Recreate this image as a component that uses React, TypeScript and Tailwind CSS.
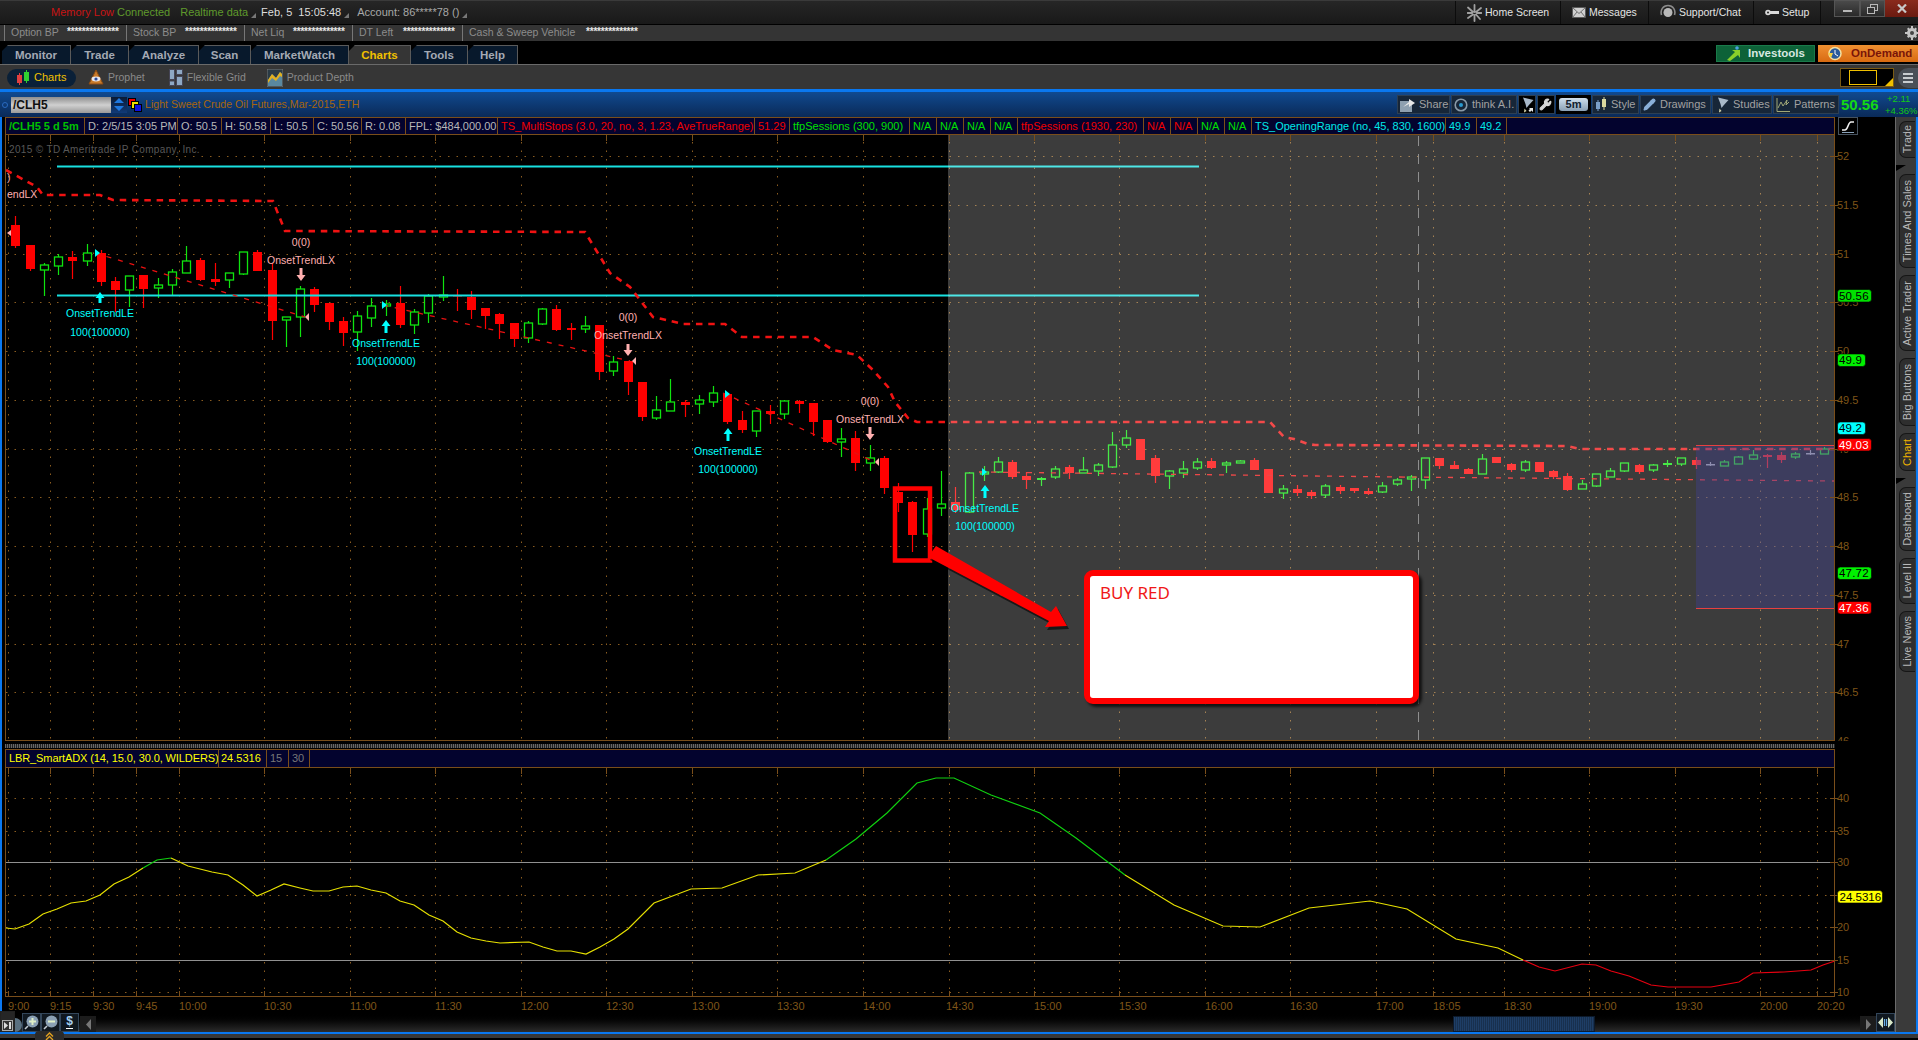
import React from "react";
import { Pencil, Wrench } from "lucide-react";

type Candle = ["r" | "g" | "f" | "x", number, number, number, number];

// kind, wick top, body top, body bottom, wick bottom
const CANDLES: Candle[] = [
  ["r", 216, 225, 246, 248], ["r", 245, 245, 269, 271], ["g", 263, 265, 270, 296], ["g", 254, 257, 266, 275],
  ["r", 251, 257, 261, 279], ["g", 244, 253, 261, 266], ["r", 250, 253, 282, 286], ["r", 277, 281, 290, 312],
  ["g", 276, 276, 290, 307], ["r", 275, 275, 289, 308], ["g", 278, 285, 288, 298], ["g", 269, 272, 285, 295],
  ["g", 246, 261, 273, 273], ["r", 258, 260, 280, 281], ["r", 263, 279, 282, 286], ["g", 273, 273, 280, 288],
  ["g", 252, 252, 274, 275], ["r", 250, 252, 271, 271], ["r", 263, 270, 321, 340], ["g", 317, 317, 320, 347],
  ["g", 286, 289, 317, 337], ["r", 287, 289, 305, 312], ["r", 303, 303, 322, 330], ["r", 317, 321, 333, 346],
  ["g", 311, 316, 332, 351], ["g", 298, 306, 318, 327], ["g", 300, 304, 306, 316], ["r", 286, 303, 325, 328],
  ["g", 309, 312, 325, 334], ["g", 294, 296, 313, 323], ["g", 276, 295, 296, 301], ["r", 289, 295, 296, 311],
  ["r", 291, 297, 310, 319], ["r", 308, 308, 316, 329], ["r", 313, 314, 324, 339], ["r", 323, 323, 339, 347],
  ["g", 321, 323, 338, 343], ["g", 308, 309, 324, 325], ["r", 305, 309, 330, 331], ["r", 323, 328, 330, 340],
  ["g", 316, 326, 329, 333], ["r", 325, 325, 372, 380], ["g", 356, 362, 371, 376], ["r", 361, 361, 382, 395],
  ["r", 382, 382, 417, 421], ["g", 396, 410, 418, 420], ["g", 379, 402, 411, 411], ["r", 400, 402, 405, 417],
  ["g", 395, 400, 404, 414], ["g", 386, 393, 402, 407], ["r", 394, 394, 422, 424], ["r", 411, 420, 430, 433],
  ["g", 411, 411, 431, 437], ["r", 405, 411, 414, 424], ["g", 400, 401, 414, 419], ["r", 400, 401, 404, 413],
  ["r", 403, 403, 422, 436], ["r", 420, 420, 442, 443], ["g", 428, 439, 442, 457], ["r", 431, 438, 463, 471],
  ["g", 445, 458, 463, 471], ["r", 456, 458, 488, 494], ["r", 483, 492, 503, 512], ["r", 501, 502, 535, 552],
  ["g", 498, 509, 534, 537], ["g", 471, 504, 508, 516], ["r", 487, 502, 510, 513], ["g", 472, 473, 512, 513],
  ["g", 466, 472, 472, 481], ["g", 457, 462, 472, 473], ["r", 460, 462, 477, 479], ["r", 472, 476, 480, 489],
  ["f", 477, 478, 480, 486], ["g", 466, 469, 477, 479], ["r", 465, 467, 473, 479], ["g", 457, 470, 473, 473],
  ["g", 463, 465, 471, 476], ["g", 432, 445, 467, 468], ["g", 430, 438, 445, 448], ["r", 439, 439, 460, 460],
  ["r", 455, 458, 476, 483], ["g", 470, 471, 476, 489], ["g", 461, 469, 473, 478], ["g", 458, 462, 468, 470],
  ["r", 458, 461, 468, 469], ["g", 461, 463, 465, 473], ["g", 460, 461, 463, 463], ["r", 458, 460, 470, 470],
  ["r", 469, 469, 493, 493], ["g", 485, 489, 493, 499], ["r", 485, 489, 493, 496], ["r", 490, 492, 496, 499],
  ["g", 484, 486, 495, 498], ["r", 485, 487, 491, 494], ["r", 488, 488, 491, 493], ["r", 488, 491, 494, 495],
  ["g", 482, 486, 492, 493], ["g", 478, 480, 484, 486], ["g", 475, 477, 479, 491], ["g", 458, 458, 480, 489],
  ["r", 458, 458, 466, 469], ["r", 461, 465, 469, 469], ["r", 468, 469, 474, 474], ["g", 454, 459, 474, 474],
  ["r", 457, 457, 463, 463], ["r", 463, 464, 470, 472], ["g", 460, 462, 470, 472], ["r", 462, 462, 472, 472],
  ["r", 470, 471, 477, 479], ["r", 473, 476, 490, 491], ["g", 480, 484, 489, 489], ["g", 474, 474, 486, 487],
  ["g", 468, 471, 477, 477], ["g", 463, 463, 471, 472], ["r", 464, 465, 472, 474], ["g", 464, 465, 470, 472],
  ["f", 460, 463, 465, 467], ["g", 458, 458, 464, 466], ["r", 457, 460, 465, 469], ["x", 462, 464, 465, 466],
  ["g", 460, 462, 466, 466], ["g", 456, 457, 464, 464], ["g", 450, 455, 459, 460], ["r", 454, 455, 457, 468],
  ["r", 452, 455, 460, 463], ["g", 452, 454, 457, 459], ["x", 450, 453, 453, 455], ["g", 447, 449, 454, 454],
];

const GRID_X = [8, 50, 93, 136, 179, 264, 350, 435, 521, 606, 692, 777, 863, 949, 1034, 1119, 1205, 1290, 1376, 1433, 1504, 1589, 1675, 1760, 1817];

const TIME_LABELS: [string, number][] = [
  ["9:00", 8], ["9:15", 50], ["9:30", 93], ["9:45", 136], ["10:00", 179], ["10:30", 264], ["11:00", 350], ["11:30", 435],
  ["12:00", 521], ["12:30", 606], ["13:00", 692], ["13:30", 777], ["14:00", 863], ["14:30", 946], ["15:00", 1034],
  ["15:30", 1119], ["16:00", 1205], ["16:30", 1290], ["17:00", 1376], ["18:05", 1433], ["18:30", 1504], ["19:00", 1589],
  ["19:30", 1675], ["20:00", 1760], ["20:20", 1817],
];

const PRICES = ["52", "51.5", "51", "50.5", "50", "49.5", "49", "48.5", "48", "47.5", "47", "46.5", "46"];

const ADX_SCALE: [string, number][] = [["40", 798], ["35", 831], ["30", 862], ["25", 895], ["20", 927], ["15", 960], ["10", 992]];

const STUDY_CELLS = [
  { t: "/CLH5 5 d 5m", c: "w-[79px] text-[#00c000] font-bold" },
  { t: "D: 2/5/15 3:05 PM", c: "w-[93px] text-[#b8b8b8]" },
  { t: "O: 50.5", c: "w-[44px] text-[#b8b8b8]" },
  { t: "H: 50.58", c: "w-[49px] text-[#b8b8b8]" },
  { t: "L: 50.5", c: "w-[43px] text-[#b8b8b8]" },
  { t: "C: 50.56", c: "w-[48px] text-[#b8b8b8]" },
  { t: "R: 0.08", c: "w-[44px] text-[#b8b8b8]" },
  { t: "FPL: $484,000.00", c: "w-[92px] text-[#b8b8b8]" },
  { t: "TS_MultiStops (3.0, 20, no, 3, 1.23, AveTrueRange)", c: "w-[257px] text-[#f00000]" },
  { t: "51.29", c: "w-[35px] text-[#f00000]" },
  { t: "tfpSessions (300, 900)", c: "w-[120px] text-[#00e000]" },
  { t: "N/A", c: "w-[27px] text-[#00e000]" },
  { t: "N/A", c: "w-[27px] text-[#00e000]" },
  { t: "N/A", c: "w-[27px] text-[#00e000]" },
  { t: "N/A", c: "w-[27px] text-[#00e000]" },
  { t: "tfpSessions (1930, 230)", c: "w-[126px] text-[#f00000]" },
  { t: "N/A", c: "w-[27px] text-[#f00000]" },
  { t: "N/A", c: "w-[27px] text-[#f00000]" },
  { t: "N/A", c: "w-[27px] text-[#00e000]" },
  { t: "N/A", c: "w-[27px] text-[#00e000]" },
  { t: "TS_OpeningRange (no, 45, 830, 1600)", c: "w-[194px] text-[#00e8e8]" },
  { t: "49.9", c: "w-[31px] text-[#00e8e8]" },
  { t: "49.2", c: "w-[30px] text-[#00e8e8]" },
];

const TABS = [
  { t: "Monitor", w: "w-[69px]" },
  { t: "Trade", w: "w-[58px]" },
  { t: "Analyze", w: "w-[70px]" },
  { t: "Scan", w: "w-[52px]" },
  { t: "MarketWatch", w: "w-[98px]" },
  { t: "Charts", w: "w-[62px]", active: true },
  { t: "Tools", w: "w-[57px]" },
  { t: "Help", w: "w-[50px]" },
];

const ACCOUNT_CELLS = [
  { t: "Option BP", w: "w-[122px]", g: "w-[56px]" },
  { t: "Stock BP", w: "w-[118px]", g: "w-[52px]" },
  { t: "Net Liq", w: "w-[108px]", g: "w-[42px]" },
  { t: "DT Left", w: "w-[110px]", g: "w-[44px]" },
];

const SIDE_TABS = [
  { t: "Trade", c: "h-[37px] mt-[4px]" },
  { t: "Times And Sales", c: "h-[94px] mt-[16px]", pointer: true },
  { t: "Active Trader", c: "h-[76px] mt-[7px]" },
  { t: "Big Buttons", c: "h-[68px] mt-[7px]" },
  { t: "Chart", c: "h-[38px] mt-[7px] text-[#f0b400]" },
  { t: "Dashboard", c: "h-[64px] mt-[16px]", pointer: true },
  { t: "Level II", c: "h-[46px] mt-[7px]" },
  { t: "Live News", c: "h-[61px] mt-[7px]" },
];

const ADX_YELLOW_1 = "6,928 15,929 29,924 43,914 57,909 71,903 86,901 100,895 114,884 129,877 143,868";
const ADX_GREEN_1 = "143,868 157,860 171,858";
const ADX_YELLOW_2 =
  "171,858 188,866 200,869 212,872 228,875 243,885 257,896 271,890 284,884 300,888 313,891 329,891 343,887 357,886 371,890 386,893 400,901 414,905 429,915 443,921 457,932 471,938 486,941 500,943 529,942 543,947 557,951 571,951 586,954 600,947 614,939 628,929 654,903 691,889 722,888 758,875 795,873 826,860";
const ADX_GREEN_2 = "826,860 856,839 887,813 917,783 936,778 954,778 991,795 1040,813 1076,838 1125,875";
const ADX_YELLOW_3 = "1125,875 1174,905 1223,926 1260,927 1309,908 1370,901 1407,909 1456,939 1498,948 1523,960";
const ADX_RED =
  "1523,960 1539,967 1555,971 1582,964 1596,965 1611,971 1629,976 1651,985 1668,987 1711,987 1739,982 1753,973 1784,972 1811,970 1823,965 1835,961";

const SIGNALS = [
  { x: 100, kind: "LE", arrow: [292, 303], tri: [95, 253], l1: 313, l2: 332 },
  { x: 301, kind: "LX", arrow: [268, 281], tri: [305, 317], l1: 242, l2: 260 },
  { x: 386, kind: "LE", arrow: [320, 333], tri: [382, 305], l1: 343, l2: 361 },
  { x: 628, kind: "LX", arrow: [344, 356], tri: [632, 361], l1: 317, l2: 335 },
  { x: 728, kind: "LE", arrow: [428, 441], tri: [725, 394], l1: 451, l2: 469 },
  { x: 870, kind: "LX", arrow: [427, 440], tri: [875, 462], l1: 401, l2: 419 },
  { x: 985, kind: "LE", arrow: [485, 498], tri: [982, 472], l1: 508, l2: 526 },
];

const ARROW_PATH = "M936 546L1051 612L1056 606L1067 626L1045 627L1049 621L928 557Z";

const Corner = () => (
  <svg width="5" height="5" viewBox="0 0 5 5" className="mt-[6px] ml-[3px]">
    <path d="M5 0V5H0Z" fill="#777" />
  </svg>
);

const TopBar = () => (
  <div className="flex h-[25px] shrink-0 justify-between border-t border-b border-t-[#3a3a3a] border-b-black bg-gradient-to-b from-[#262626] to-[#191919] text-[11px]">
    <div className="flex items-center pl-[51px]">
      <span className="text-[#c81414]">Memory Low</span>
      <span className="ml-[3px] text-[#5f9a2c]">Connected</span>
      <span className="ml-[10px] text-[#5f9a2c]">Realtime data</span>
      <Corner />
      <span className="ml-[5px] text-[#dddddd]">Feb, 5&nbsp; 15:05:48</span>
      <Corner />
      <span className="ml-[8px] text-[#a8a8a8]">Account: 86*****78 ()</span>
      <Corner />
    </div>
    <div className="flex items-start">
      <div className="flex h-[23px] items-center border-l border-[#0c0c0c]">
        <NavItem label="Home Screen" w="w-[105px]" icon={<HomeIcon />} />
        <NavItem label="Messages" w="w-[88px]" icon={<MailIcon />} />
        <NavItem label="Support/Chat" w="w-[105px]" icon={<HeadsetIcon />} />
        <NavItem label="Setup" w="w-[67px]" icon={<SetupIcon />} />
      </div>
      <div className="-mt-px ml-[13px] flex h-[17px] text-[#b0b0b0]">
        <div className="flex w-[26px] items-center justify-center border border-[#555] bg-gradient-to-b from-[#4a4a4a] to-[#2a2a2a]">
          <div className="mt-[4px] h-[2px] w-[9px] bg-[#b8b8b8]" />
        </div>
        <div className="flex w-[25px] items-center justify-center border border-[#555] bg-gradient-to-b from-[#4a4a4a] to-[#2a2a2a]">
          <svg width="11" height="10" viewBox="0 0 11 10" fill="none" stroke="#b8b8b8">
            <rect x="3.5" y="0.5" width="7" height="6" />
            <rect x="0.5" y="3.5" width="7" height="6" fill="#333" />
          </svg>
        </div>
        <div className="flex w-[33px] items-center justify-center bg-gradient-to-b from-[#8a2a1c] to-[#6a1a10]">
          <svg width="10" height="9" viewBox="0 0 10 9" stroke="#c8c8c8" strokeWidth="2.2">
            <path d="M1 0.5L9 8.5M9 0.5L1 8.5" />
          </svg>
        </div>
      </div>
    </div>
  </div>
);

const NavItem = ({ label, w, icon }: { label: string; w: string; icon: React.ReactNode }) => (
  <div className={`flex h-full items-center gap-[3px] border-r border-[#0c0c0c] pl-[11px] text-[10.5px] text-[#e4e4e4] ${w}`}>
    {icon}
    <span>{label}</span>
  </div>
);

const HomeIcon = () => (
  <svg width="15" height="18" viewBox="0 0 15 18" stroke="#a0a0a0" strokeWidth="1.8" strokeLinecap="round">
    <path d="M7.5 1V8M7.5 11V17M1 3.5L6 8M14 4L9 8M1 14L6 10.5M13 15L9 10.5M0.5 9H5M10 9H14.5" />
  </svg>
);

const MailIcon = () => (
  <svg width="14" height="11" viewBox="0 0 14 11" fill="#d0d0d0" stroke="#555" strokeWidth="0.8">
    <rect x="0.5" y="0.5" width="13" height="10" />
    <path d="M0.5 0.5L7 6.5L13.5 0.5M0.5 10.5L5 5M13.5 10.5L9 5" fill="none" />
  </svg>
);

const HeadsetIcon = () => (
  <svg width="16" height="17" viewBox="0 0 16 17" fill="none">
    <circle cx="8" cy="8.5" r="4.5" fill="#b8b8b8" />
    <path d="M1.5 11C0 6 3 1.5 8 1.5S16 6 14.5 11" stroke="#8a8a8a" strokeWidth="1.6" />
  </svg>
);

const SetupIcon = () => (
  <svg width="14" height="9" viewBox="0 0 14 9" fill="#d8d8d8">
    <circle cx="3" cy="4.5" r="2.8" />
    <rect x="3" y="3" width="11" height="3" />
    <circle cx="3" cy="4.5" r="1" fill="#222" />
  </svg>
);

const AccountBar = () => (
  <div className="flex h-[17px] shrink-0 items-center border-b border-black bg-[#343434] pl-[4px] text-[10.5px] text-[#8c8c8c]">
    {ACCOUNT_CELLS.map((cell) => (
      <div key={cell.t} className={`flex h-full items-center border-l border-[#777] pl-[6px] ${cell.w}`}>
        <span className={cell.g}>{cell.t}</span>
        <span className="-mt-[3px] text-[10px] font-bold tracking-[-0.2px] text-[#e8e8e8]">**************</span>
      </div>
    ))}
    <div className="flex h-full items-center border-l border-[#777] pl-[6px]">
      <span className="w-[117px]">Cash &amp; Sweep Vehicle</span>
      <span className="-mt-[3px] text-[10px] font-bold tracking-[-0.2px] text-[#e8e8e8]">**************</span>
    </div>
    <svg className="ml-auto" width="13" height="14" viewBox="0 0 13 14" fill="#c4c4c4">
      <circle cx="7" cy="7" r="5" />
      <path d="M6 0H8V14H6ZM0 6H14V8H0ZM2 3L3.4 1.6L12 10.6L10.6 12ZM10.6 1.6L12 3L3.4 12L2 10.6Z" />
      <circle cx="7" cy="7" r="2" fill="#444" />
    </svg>
  </div>
);

const TabsBar = () => (
  <div className="flex h-[22px] shrink-0 items-end justify-between bg-black pl-[2px]">
    <div className="flex h-[19px]">
      {TABS.map((tab) => (
        <div
          key={tab.t}
          className={`flex items-center justify-center border-t border-r border-[#5a5a5a] pt-[2px] text-[11.5px] font-bold [clip-path:polygon(6px_0,100%_0,100%_100%,0_100%,0_6px)] ${tab.w} ${
            tab.active ? "bg-[#353535] text-[#f0c000]" : "bg-[#08192c] text-[#a4aab4]"
          }`}
        >
          {tab.t}
        </div>
      ))}
    </div>
    <div className="flex h-[19px] pb-[2px]">
      <div className="flex w-[99px] items-center gap-[4px] border border-[#1a7a4a] bg-[#0d6238] pl-[9px] text-[11.5px] font-bold text-[#d8e8e0]">
        <svg width="16" height="15" viewBox="0 0 16 15">
          <path d="M1 14L9 6L6 4H14V12L12 9L4 15Z" fill="#8ad02a" />
          <circle cx="11" cy="2" r="1.8" fill="#4aa0e0" />
        </svg>
        <span className="ml-[2px]">Investools</span>
      </div>
      <div className="ml-[3px] flex w-[100px] items-center gap-[8px] bg-gradient-to-b from-[#f09030] to-[#d86a10] pl-[9px] text-[11.5px] font-bold text-[#7a1408]">
        <svg width="16" height="15" viewBox="0 0 16 15">
          <circle cx="8" cy="7.5" r="6" fill="#2a5a9a" stroke="#f4e0a0" strokeWidth="1.5" />
          <path d="M1 7L6 7L4 12Z" fill="#f4d040" />
          <path d="M8 4V8L11 10" stroke="#fff" fill="none" />
        </svg>
        <span>OnDemand</span>
      </div>
    </div>
  </div>
);

const SubBar = () => (
  <div className="flex h-[25px] shrink-0 items-center border-t border-[#6a6a6a] bg-[#363636] pt-px text-[10.5px] text-[#8a8a8a]">
    <div className="ml-[7px] flex h-[18px] w-[69px] items-center gap-[4px] rounded-full bg-[#0a2038] pl-[9px] text-[11px] text-[#f0c000]">
      <svg width="14" height="15" viewBox="0 0 14 15">
        <rect x="1" y="5" width="5" height="8" fill="#e04040" />
        <rect x="3" y="3" width="1" height="12" fill="#e04040" />
        <rect x="8" y="2" width="5" height="9" fill="#30d030" />
        <rect x="10" y="0" width="1" height="13" fill="#30d030" />
      </svg>
      <span>Charts</span>
    </div>
    <div className="ml-[12px] flex items-center gap-[4px]">
      <svg width="16" height="17" viewBox="0 0 16 17">
        <path d="M8 1L15 15H1Z" fill="#c87a2a" stroke="#8a4a14" />
        <ellipse cx="8" cy="10" rx="4.5" ry="2.4" fill="#e8e8f0" />
        <circle cx="8" cy="10" r="1.6" fill="#2a4a9a" />
      </svg>
      <span>Prophet</span>
    </div>
    <div className="ml-[24px] flex items-center gap-[4px]">
      <svg width="14" height="17" viewBox="0 0 14 17" fill="#8ea8c4" stroke="#445">
        <rect x="0.5" y="0.5" width="5" height="10" />
        <rect x="7.5" y="0.5" width="6" height="5" />
        <rect x="7.5" y="7.5" width="6" height="9" />
        <rect x="0.5" y="12" width="5" height="4.5" />
      </svg>
      <span>Flexible Grid</span>
    </div>
    <div className="ml-[21px] flex items-center gap-[4px]">
      <svg width="16" height="18" viewBox="0 0 16 18">
        <rect width="16" height="18" fill="#2a3a44" stroke="#777" />
        <path d="M1 11L5 5L9 9L13 3L15 5V17H1Z" fill="#5a88a0" />
        <path d="M1 11L5 5L9 9L13 3L15 5V8L13 7L9 12L5 9L1 14Z" fill="#e0b020" />
      </svg>
      <span>Product Depth</span>
    </div>
    <div className="ml-auto flex items-center gap-[4px]">
      <div className="relative flex h-[19px] w-[54px] items-center justify-center border border-[#7a5a14] bg-black">
        <div className="h-[15px] w-[28px] -translate-x-[4px] border border-[#f0c000]" />
        <svg className="absolute right-0 bottom-0" width="8" height="8" viewBox="0 0 8 8">
          <path d="M8 0V8H0Z" fill="#f0c000" />
        </svg>
      </div>
      <div className="flex h-[20px] w-[20px] flex-col items-center justify-center gap-[2px] rounded-l-full bg-[#4a5058]">
        <div className="h-[2px] w-[10px] bg-[#c8ccd0]" />
        <div className="h-[2px] w-[10px] bg-[#c8ccd0]" />
        <div className="h-[2px] w-[10px] bg-[#c8ccd0]" />
      </div>
    </div>
  </div>
);

const ToolButton = ({ label, w, icon }: { label?: string; w: string; icon: React.ReactNode }) => (
  <div className={`flex h-[19px] items-center gap-[4px] border border-[#2c3f54] bg-[#172638] pl-[2px] text-[11px] text-[#a2a2a2] ${w}`}>
    {icon}
    {label && <span>{label}</span>}
  </div>
);

const FunnelIcon = ({ arrows }: { arrows?: boolean }) => (
  <svg width="14" height="16" viewBox="0 0 14 16">
    <path d="M3 0.5L13.5 3L8.5 8.5L6.5 11L5.5 7Z" fill="#a8b8c8" />
    <path d="M4.5 11.5L6.5 14L4 15.5Z" fill="#d8d8b0" />
    {arrows && <path d="M9 11L13 11V15L11.5 13.5L10 15L8.5 13.5L10 12Z" fill="#e8e8e8" />}
  </svg>
);

const HeaderRow = () => (
  <div className="flex h-[25px] shrink-0 items-center bg-gradient-to-b from-[#104a90] to-[#0a2a58]">
    <div className="ml-[2px] h-[6px] w-[6px] rounded-full border border-[#2a6ac0]" />
    <div className="ml-[3px] flex h-[16px] w-[100px] items-center bg-gradient-to-b from-[#8e8e8e] via-[#d0d0d0] to-[#9a9a9a] pl-[2px] text-[12px] font-bold text-[#101010]">
      /CLH5
    </div>
    <div className="flex h-[16px] w-[16px] flex-col items-center justify-center gap-[1px] bg-gradient-to-b from-[#0a1a34] to-[#103a78]">
      <svg width="10" height="13" viewBox="0 0 10 13" fill="#1e78e0">
        <path d="M0 5L5 0L10 5ZM0 8H10L5 13Z" />
      </svg>
    </div>
    <svg className="ml-[1px]" width="14" height="14" viewBox="0 0 14 14">
      <rect x="0.5" y="0.5" width="7" height="7" fill="#f00000" stroke="#000" />
      <rect x="3.5" y="3.5" width="7" height="7" fill="#f0e000" stroke="#000" />
      <rect x="6.5" y="6.5" width="7" height="7" fill="#1010e0" stroke="#000" />
    </svg>
    <span className="ml-[3px] text-[10.6px] text-[#a8660c]">Light Sweet Crude Oil Futures,Mar-2015,ETH</span>
    <div className="ml-auto flex items-center gap-px">
      <ToolButton
        label="Share"
        w="w-[53px]"
        icon={
          <svg width="15" height="14" viewBox="0 0 15 14">
            <rect y="3" width="12" height="11" fill="#8ea0b0" />
            <path d="M3 9L9 4V1L15 5L9 9V6Z" fill="#e8e8e8" />
          </svg>
        }
      />
      <ToolButton
        label="think A.I."
        w="w-[66px]"
        icon={
          <svg width="14" height="14" viewBox="0 0 14 14" fill="none">
            <circle cx="7" cy="7" r="5.8" stroke="#8a9aa8" strokeWidth="1.6" />
            <circle cx="7" cy="7" r="2" fill="#2a9ad0" />
          </svg>
        }
      />
      <ToolButton w="w-[18px] !bg-black !pl-[1px]" icon={<FunnelIcon arrows />} />
      <ToolButton w="w-[18px] !bg-black !pl-[1px]" icon={<Wrench size={13} color="#d8d8d8" fill="#d8d8d8" />} />
      <div className="flex h-[19px] w-[35px] items-center justify-center bg-black">
        <div className="flex h-[13px] w-[29px] items-center justify-center rounded-[3px] bg-gradient-to-b from-[#cfe0ee] to-[#8aa0b4] text-[11px] font-bold text-[#10202e]">
          5m
        </div>
      </div>
      <ToolButton
        label="Style"
        w="w-[47px]"
        icon={
          <svg width="12" height="15" viewBox="0 0 12 15">
            <rect x="1" y="5" width="4" height="7" fill="#7aa0c8" />
            <rect x="2.5" y="3" width="1" height="11" fill="#7aa0c8" />
            <rect x="7" y="2" width="4" height="8" fill="#d8d8a0" />
            <rect x="8.5" y="0" width="1" height="13" fill="#d8d8a0" />
          </svg>
        }
      />
      <ToolButton label="Drawings" w="w-[71px]" icon={<Pencil size={13} color="#8ab0d8" fill="#8ab0d8" />} />
      <ToolButton label="Studies" w="w-[60px]" icon={<FunnelIcon />} />
      <ToolButton
        label="Patterns"
        w="w-[66px]"
        icon={
          <svg width="14" height="14" viewBox="0 0 14 14" fill="none" stroke="#a0a878">
            <path d="M1 0V13.5H14" />
            <path d="M2 10L5 4L7 8L11 2L10 7L13 4" />
          </svg>
        }
      />
    </div>
    <span className="ml-[2px] w-[44px] text-[15px] leading-none font-bold text-[#14d814]">50.56</span>
    <div className="mr-[1px] flex w-[32px] flex-col text-[9.5px] leading-[12px] text-[#14c814]">
      <span className="pl-[2px]">+2.11</span>
      <span className="whitespace-nowrap">+4.36%</span>
    </div>
  </div>
);

const StudyRow = () => (
  <div className="flex h-[18px] shrink-0">
    <div className="flex w-[1830px] border border-[#7a4e1a] bg-[#03032e] text-[11px] leading-[16px]">
      {STUDY_CELLS.map((cell, i) => (
        <div key={i} className={`h-full shrink-0 overflow-hidden border-r border-[#7a4e1a] pl-[3px] whitespace-nowrap ${cell.c}`}>
          {cell.t}
        </div>
      ))}
    </div>
    <div className="ml-[3px] flex h-[18px] w-[20px] items-center justify-center border border-[#46525e] bg-black">
      <svg width="14" height="14" viewBox="0 0 14 14" fill="none">
        <path d="M1 11H4C7 11 7 3 10 3H13" stroke="#f0f0f0" strokeWidth="1.6" />
        <path d="M1 13.5H13" stroke="#88a0b8" strokeWidth="1" />
      </svg>
    </div>
  </div>
);

const DottedGrid = ({ top, bottom, rows }: { top: number; bottom: number; rows: number[] }) => (
  <g stroke="#8a5c20" strokeWidth="1" strokeDasharray="1.5 7">
    {GRID_X.map((x) => (
      <line key={x} x1={x + 0.5} x2={x + 0.5} y1={top} y2={bottom} />
    ))}
    {rows.map((y) => (
      <line key={y} x1={6} x2={1834} y1={y + 0.5} y2={y + 0.5} />
    ))}
  </g>
);

const PriceTag = ({ y, w, fill, color, text }: { y: number; w: number; fill: string; color: string; text: string }) => (
  <g>
    <rect x="1837.5" y={y} width={w} height="12.5" rx="3" fill={fill} stroke="#000" strokeWidth="0.6" />
    <text x="1839" y={y + 10} fontSize="11.5" fill={color} letterSpacing="0.2">
      {text}
    </text>
  </g>
);

const Candles = () => (
  <g>
    {CANDLES.map(([kind, wickTop, bodyTop, bodyBottom, wickBottom], i) => {
      const x = Math.round(15.3 + i * 14.24);
      const color = kind === "r" ? "#ff0000" : kind === "x" ? "#b0b0b0" : "#0fe40f";
      return (
        <g key={i}>
          <line x1={x + 0.5} x2={x + 0.5} y1={wickTop} y2={wickBottom} stroke={color} strokeWidth="1.2" />
          {kind === "g" ? (
            <rect x={x - 3.5} y={bodyTop} width="8" height={Math.max(bodyBottom - bodyTop, 2)} fill="#000" stroke={color} strokeWidth="1.3" />
          ) : (
            <rect x={x - 4} y={bodyTop} width="9" height={Math.max(bodyBottom - bodyTop, 1.5)} fill={color} />
          )}
        </g>
      );
    })}
  </g>
);

const Signal = ({ s }: { s: (typeof SIGNALS)[number] }) => {
  const isEntry = s.kind === "LE";
  const color = isEntry ? "#00ffff" : "#ffb0b0";
  const [a0, a1] = s.arrow;
  return (
    <g>
      {isEntry ? (
        <path d={`M${s.x} ${a0}l4.5 6h-3v${a1 - a0 - 6}h-3v${-(a1 - a0 - 6)}h-3z`} fill={color} />
      ) : (
        <path d={`M${s.x} ${a1}l4.5 -6h-3v${-(a1 - a0 - 6)}h-3v${a1 - a0 - 6}h-3z`} fill={color} />
      )}
      <path d={isEntry ? `M${s.tri[0]} ${s.tri[1] - 4}l5 4l-5 4z` : `M${s.tri[0]} ${s.tri[1]}l4 -4v8z`} fill={color} />
      {isEntry ? (
        <g fill={color} fontSize="10.5" textAnchor="middle">
          <text x={s.x} y={s.l1 + 4}>OnsetTrendLE</text>
          <text x={s.x} y={s.l2 + 4}>100(100000)</text>
        </g>
      ) : (
        <g fill={color} fontSize="10.5" textAnchor="middle">
          <text x={s.x} y={s.l1 + 4}>0(0)</text>
          <text x={s.x} y={s.l2 + 4}>OnsetTrendLX</text>
        </g>
      )}
    </g>
  );
};

const PriceChart = () => {
  const rows = PRICES.map((_, k) => Math.round(156 + k * 48.75));
  return (
    <div className="relative h-[606px] shrink-0 bg-black">
      <svg width="1890" height="606" viewBox="5 135 1890 606" className="block">
        <DottedGrid top={142} bottom={741} rows={rows.slice(0, 12)} />
        <line x1="1418.5" x2="1418.5" y1="136" y2="741" stroke="#6c6c6c" strokeDasharray="10 8" />
        <Candles />
        <g stroke="#18e0e0" strokeWidth="2.2">
          <line x1="57" x2="1199" y1="166.5" y2="166.5" />
          <line x1="57" x2="1199" y1="295.5" y2="295.5" />
        </g>
        <polyline
          fill="none"
          stroke="#f01212"
          strokeWidth="2.6"
          strokeDasharray="6.5 5.8"
          points="6,170 37,187 43,195 100,195 113,200 273,201 285,231 585,232 610,273 630,287 653,317 662,319 683,324 725,324 742,337 813,337 833,350 857,355 873,370 888,387 895,402 908,418 917,422 1270,422 1284,437 1294,439 1308,444 1315,445 1567,446 1580,449 1834,449"
        />
        <g fill="none" stroke="#e81010" strokeWidth="1.3" strokeDasharray="5 7">
          <line x1="95" y1="253" x2="305" y2="317" />
          <line x1="383" y1="305" x2="630" y2="361" />
          <line x1="723" y1="393" x2="877" y2="463" />
          <line x1="979" y1="472" x2="1400" y2="477" />
          <line x1="1400" y1="477" x2="1834" y2="481" />
        </g>
        {/* after-hours shading sits on top of the bars, same as the platform */}
        <rect x="948" y="135" width="886" height="606" fill="#ffffff" opacity="0.235" />
        <rect x="1696" y="445.5" width="138" height="163" fill="#3e3e91" opacity="0.4" />
        <g stroke="#e84040" strokeWidth="1">
          <line x1="1696" x2="1834" y1="445.5" y2="445.5" />
          <line x1="1696" x2="1834" y1="608.5" y2="608.5" />
        </g>
        <g stroke="#7a4e1a">
          <line x1="5.5" x2="5.5" y1="135" y2="741" />
          <line x1="1834.5" x2="1834.5" y1="135" y2="741" />
          <line x1="5" x2="1835" y1="740.5" y2="740.5" />
          {GRID_X.map((x) => (
            <line key={x} x1={x + 0.5} x2={x + 0.5} y1="135" y2="141" />
          ))}
          {rows.map((y) => (
            <line key={y} x1="1830" x2="1838" y1={y + 0.5} y2={y + 0.5} />
          ))}
        </g>
        <g fill="#7f5518" fontSize="11">
          {PRICES.map((p, k) => (
            <text key={p} x="1837" y={rows[k] + 4}>
              {p}
            </text>
          ))}
        </g>
        <text x="9" y="153" fontSize="10" fill="#585858" letterSpacing="0.35">
          2015 © TD Ameritrade IP Company, Inc.
        </text>
        <text x="7" y="181" fontSize="10.5" fill="#ffb0b0">)</text>
        <text x="7" y="198" fontSize="10.5" fill="#ffb0b0">endLX</text>
        <path d="M7 233l4 -3v6z" fill="#ffb0b0" />
        {SIGNALS.map((s) => (
          <Signal key={s.x} s={s} />
        ))}
        <rect x="895" y="488.5" width="35" height="72" fill="none" stroke="#ff0000" strokeWidth="4.5" />
        <path d={ARROW_PATH} fill="#000" opacity="0.6" transform="translate(2 3)" />
        <path d={ARROW_PATH} fill="#ff0000" />
        <PriceTag y={289.5} w={34} fill="#00e000" color="#000" text="50.56" />
        <PriceTag y={354} w={28} fill="#00f000" color="#000" text="49.9" />
        <PriceTag y={422} w={28} fill="#00ffff" color="#000" text="49.2" />
        <PriceTag y={438.5} w={34} fill="#ff0000" color="#fff" text="49.03" />
        <PriceTag y={567} w={34} fill="#00f000" color="#000" text="47.72" />
        <PriceTag y={601.5} w={34} fill="#ff0000" color="#fff" text="47.36" />
      </svg>
      <div className="absolute top-[435px] left-[1079px] h-[134px] w-[335px] rounded-[9px] border-[6px] border-[#ff0000] bg-white pt-[5px] pl-[10px] font-['Noto_Sans',sans-serif] text-[17px] leading-[24px] text-[#f01818] shadow-[3px_3px_3px_rgba(0,0,0,0.7)]">
        BUY RED
      </div>
    </div>
  );
};

const Splitter = () => (
  <div className="h-[8px] shrink-0 bg-black pt-[3px]">
    <div className="h-[4px] w-[1830px] bg-[#555] [background-image:repeating-linear-gradient(90deg,#666_0,#666_1px,#222_1px,#222_2px)]" />
  </div>
);

const LowerHeader = () => (
  <div className="flex h-[19px] w-[1830px] shrink-0 border border-[#7a4e1a] bg-[#03032e] text-[11px] leading-[17px] whitespace-nowrap">
    <div className="w-[213px] overflow-hidden border-r border-[#7a4e1a] pl-[3px] tracking-[-0.1px] text-[#ffff00]">LBR_SmartADX (14, 15.0, 30.0, WILDERS)</div>
    <div className="w-[48px] border-r border-[#7a4e1a] pl-[2px] text-[#ffff00]">24.5316</div>
    <div className="w-[22px] border-r border-[#7a4e1a] pl-[3px] text-[#777]">15</div>
    <div className="w-[21px] border-r border-[#7a4e1a] pl-[3px] text-[#777]">30</div>
  </div>
);

const LowerChart = () => (
  <svg width="1890" height="244" viewBox="5 768 1890 244" className="block shrink-0">
    <DottedGrid top={775} bottom={996} rows={[798, 831, 895, 927, 992]} />
    <line x1="5" x2="1834" y1="862.5" y2="862.5" stroke="#909090" />
    <line x1="5" x2="1834" y1="960.5" y2="960.5" stroke="#909090" />
    <g fill="none" strokeWidth="1.2">
      <polyline points={ADX_YELLOW_1} stroke="#e6e000" />
      <polyline points={ADX_GREEN_1} stroke="#10d010" />
      <polyline points={ADX_YELLOW_2} stroke="#e6e000" />
      <polyline points={ADX_GREEN_2} stroke="#10d010" />
      <polyline points={ADX_YELLOW_3} stroke="#e6e000" />
      <polyline points={ADX_RED} stroke="#e80010" />
    </g>
    <g stroke="#7a4e1a">
      <line x1="5.5" x2="5.5" y1="768" y2="996" />
      <line x1="1834.5" x2="1834.5" y1="768" y2="996" />
      <line x1="5" x2="1835" y1="996.5" y2="996.5" />
      {GRID_X.map((x) => (
        <g key={x}>
          <line x1={x + 0.5} x2={x + 0.5} y1="768" y2="774" />
          <line x1={x + 0.5} x2={x + 0.5} y1="991" y2="996" />
        </g>
      ))}
      {ADX_SCALE.map(([label, y]) => (
        <line key={label} x1="1830" x2="1838" y1={y + 0.5} y2={y + 0.5} />
      ))}
    </g>
    <g fill="#7f5518" fontSize="11">
      {ADX_SCALE.filter(([label]) => label !== "25").map(([label, y]) => (
        <text key={label} x="1837" y={y + 4}>
          {label}
        </text>
      ))}
      {TIME_LABELS.map(([label, x]) => (
        <text key={label} x={x} y="1010">
          {label}
        </text>
      ))}
    </g>
    <rect x="1837.5" y="890.5" width="45" height="12.5" rx="3" fill="#ffff00" stroke="#000" strokeWidth="0.6" />
    <text x="1839.5" y="900.5" fontSize="11.5" fill="#000">
      24.5316
    </text>
  </svg>
);

const ZoomButton = ({ children }: { children: React.ReactNode }) => (
  <div className="flex h-[19px] w-[19px] items-center justify-center border border-[#33465a] bg-[#101820]">{children}</div>
);

const ScrollBar = () => (
  <div className="relative flex h-[20px] shrink-0 items-end bg-gradient-to-b from-black to-[#2c2c2c]">
    <div className="ml-[9px] h-[14px] w-[8px] overflow-hidden">
      <div className="-ml-[6px] h-[14px] w-[14px] rounded-full bg-[#5a7080]" />
    </div>
    <ZoomButton>
      <svg width="15" height="15" viewBox="0 0 15 15">
        <circle cx="8.5" cy="6.5" r="6" fill="#8aa0b4" />
        <path d="M8.5 3V10M5 6.5H12" stroke="#e0f0c8" strokeWidth="2" />
        <path d="M1 14L4 11" stroke="#c0c8d0" strokeWidth="1.6" />
      </svg>
    </ZoomButton>
    <ZoomButton>
      <svg width="15" height="15" viewBox="0 0 15 15">
        <circle cx="8.5" cy="6.5" r="6" fill="#8aa0b4" />
        <path d="M5 6.5H12" stroke="#e0f0c8" strokeWidth="2" />
        <path d="M1 14L4 11" stroke="#c0c8d0" strokeWidth="1.6" />
      </svg>
    </ZoomButton>
    <ZoomButton>
      <span className="-mt-[3px] border-b border-white text-[12px] leading-[14px] font-bold text-[#a8d0f0]">$</span>
    </ZoomButton>
    <div className="ml-px flex h-[16px] w-[16px] items-center justify-center bg-[#1c1c1c]">
      <svg width="5" height="11" viewBox="0 0 5 11">
        <path d="M5 0V11L0 5.5Z" fill="#777" />
      </svg>
    </div>
    <div className="ml-[1357px] h-[16px] w-[142px] border border-[#0c1a2c] [background-image:repeating-linear-gradient(90deg,#1e3e66_0,#1e3e66_1px,#18304e_1px,#18304e_2px)]" />
    <div className="ml-auto flex h-[16px] w-[16px] items-center justify-center bg-[#1c1c1c]">
      <svg width="5" height="11" viewBox="0 0 5 11">
        <path d="M0 0V11L5 5.5Z" fill="#777" />
      </svg>
    </div>
    <div className="flex h-[19px] w-[19px] items-center justify-center border border-[#33465a] bg-[#101820]">
      <svg width="15" height="11" viewBox="0 0 15 11">
        <path d="M5 0V11L0 5.5ZM10 0V11L15 5.5Z" fill="#d8e8c8" />
        <path d="M6.5 2V9M8.5 2V9" stroke="#6ab0e8" strokeWidth="1.2" />
      </svg>
    </div>
    <div className="absolute bottom-[-8px] left-[-5px] flex h-[29px] w-[15px] items-center justify-center border border-[#222] bg-[#262626]">
      <div className="flex h-[11px] w-[11px] items-center justify-center border border-[#aaa] bg-[#333]">
        <svg width="7" height="7" viewBox="0 0 7 7" fill="#ddd">
          <path d="M0 0L4 3.5L0 7ZM5 0H7V7H5Z" />
        </svg>
      </div>
    </div>
  </div>
);

const SideTabs = () => (
  <div className="flex w-[23px] shrink-0 flex-col border-l border-r-2 border-l-[#6a6a6a] border-r-[#0a78f0] bg-[#3a3a3a] pl-[3px]">
    {SIDE_TABS.map((tab) => (
      <div key={tab.t} className="relative">
        {tab.pointer && (
          <svg className="absolute top-[7px] -left-[3px]" width="10" height="6" viewBox="0 0 10 6">
            <path d="M0 0H10L0 6Z" fill="#000" />
          </svg>
        )}
        <div
          className={`flex w-[16px] items-center justify-center rounded-l-[7px] border border-r-0 border-[#161616] bg-[#2e2e2e] text-[11px] ${tab.c} ${
            tab.t === "Chart" ? "" : "text-[#b8b8b8]"
          }`}
        >
          <span className="rotate-180 whitespace-nowrap [writing-mode:vertical-rl]">{tab.t}</span>
        </div>
      </div>
    ))}
  </div>
);

export default function App() {
  return (
    <div className="flex h-[1040px] w-[1918px] flex-col overflow-hidden bg-black font-['Liberation_Sans',Arial,sans-serif]">
      <TopBar />
      <AccountBar />
      <TabsBar />
      <SubBar />
      <div className="flex min-h-0 flex-1 flex-col border-t-[3px] border-[#0a78f0]">
        <HeaderRow />
        <div className="flex min-h-0 flex-1">
          <div className="flex w-[1895px] shrink-0 flex-col border-l-2 border-[#0a78f0] bg-black pl-[3px]">
            <StudyRow />
            <PriceChart />
            <Splitter />
            <LowerHeader />
            <LowerChart />
            <ScrollBar />
          </div>
          <SideTabs />
        </div>
        <div className="relative h-[8px] shrink-0 border-t-2 border-[#0a78f0] bg-[#383838]">
          <div className="absolute top-[-3px] left-[35px] flex h-[11px] w-[29px] items-center justify-center rounded-t-[4px] bg-[#2a2a2a]">
            <svg width="9" height="9" viewBox="0 0 9 9" fill="none" stroke="#e0a020" strokeWidth="1.4">
              <path d="M1 4.5L4.5 1L8 4.5M1 8L4.5 4.5L8 8" />
            </svg>
          </div>
          <div className="mt-[4px] h-[2px] bg-black" />
        </div>
      </div>
    </div>
  );
}
